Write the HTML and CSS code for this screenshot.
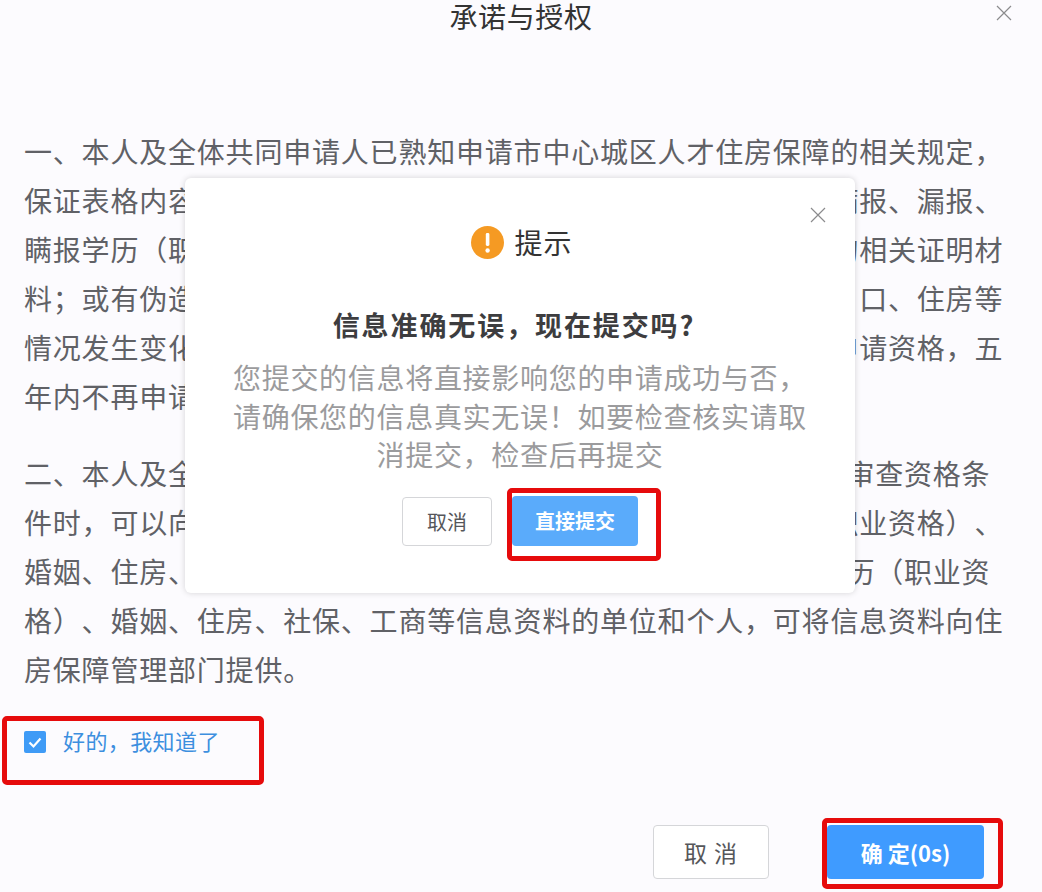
FILE: index.html
```html
<!DOCTYPE html>
<html lang="zh-CN">
<head>
<meta charset="utf-8">
<title>承诺与授权</title>
<link rel="stylesheet" href="styles.css">
</head>
<body>
<main class="page">
  <header class="head">
    <span></span>
    <h1 class="title">承诺与授权</h1>
    <svg class="close top-close" viewBox="0 0 16 16"><path d="M1 1 15 15M15 1 1 15"/></svg>
  </header>
  <section class="terms">
    <p class="para">
      <span class="ln">一、本人及全体共同申请人已熟知申请市中心城区人才住房保障的相关规定，</span>
      <span class="ln">保证表格内容真实有效，无虚假申报情况。如有虚假申请、谎报瞒报、漏报、</span>
      <span class="ln">瞒报学历（职业资格）、婚姻、住房、社保等情况；或提供虚假的相关证明材</span>
      <span class="ln">料；或有伪造、变造证件及材料等情形；或在申请审核期间本人户口、住房等</span>
      <span class="ln">情况发生变化未及时申报的，一经查实，将取消本人及全体共同申请资格，五</span>
      <span class="ln">年内不再申请市中心城区人才住房保障。</span>
    </p>
    <p class="para">
      <span class="ln">二、本人及全体共同申请人同意，市住房保障管理部门<span class="half"></span>在受理和审查资格条</span>
      <span class="ln">件时，可以向公安、民政、人社、市监等单位查询本人的学历（职业资格）、</span>
      <span class="ln">婚姻、住房、社保、工商等信息资料；凡掌握本人及家庭<span class="half"></span>成员学历（职业资</span>
      <span class="ln">格）、婚姻、住房、社保、工商等信息资料的单位和个人，可将信息资料向住</span>
      <span class="ln">房保障管理部门提供。</span>
    </p>
  </section>
  <div class="agree mark">
    <span class="check"><svg viewBox="0 0 22 22"><path d="M5.5 11.5 9.5 15.5 16.5 7.5"/></svg></span>
    <span class="agree-text">好的，我知道了</span>
  </div>
  <footer class="foot">
    <button class="btn btn-plain foot-cancel">取 消</button>
    <div class="mark foot-mark"><button class="btn btn-blue foot-ok">确 定(0s)</button></div>
  </footer>

  <div class="modal">
    <svg class="close modal-close" viewBox="0 0 16 16"><path d="M1 1 15 15M15 1 1 15"/></svg>
    <div class="modal-head">
      <svg class="warn" viewBox="0 0 33 33"><circle cx="16.5" cy="16.5" r="16.5"/><rect class="warn-bar" x="14.8" y="7" width="3.6" height="13" rx="1.4"/><circle class="warn-dot" cx="16.6" cy="24.5" r="2.2"/></svg>
      <span class="modal-title">提示</span>
    </div>
    <h2 class="modal-q">信息准确无误，现在提交吗?</h2>
    <p class="modal-desc">您提交的信息将直接影响您的申请成功与否，<br>请确保您的信息真实无误！如要检查核实请取<br>消提交，检查后再提交</p>
    <div class="modal-actions">
      <button class="btn btn-plain modal-cancel">取消</button>
      <div class="mark modal-mark"><button class="btn btn-blue modal-ok">直接提交</button></div>
    </div>
  </div>
</main>
</body>
</html>
```

FILE: styles.css
```css
* { box-sizing: border-box; }
html, body { margin: 0; padding: 0; }
body {
  background: #fcfbfe;
  font-family: "Noto Sans CJK SC", "Noto Sans", sans-serif;
  text-spacing-trim: space-all;
  font-feature-settings: "palt" 0;
}
.page {
  position: relative;
  width: 1042px;
  height: 892px;
  overflow: hidden;
  display: flex;
  flex-direction: column;
}
.head {
  display: grid;
  grid-template-columns: 1fr auto 1fr;
  align-items: start;
  height: 127px;
  padding: 0 30px;
}
.title {
  margin: 0;
  font-size: 28px;
  font-weight: 400;
  line-height: 32px;
  color: #333;
  letter-spacing: .6px;
}
.close { fill: none; stroke: #8b8b8d; stroke-width: 1.2; }
.top-close { width: 16px; height: 16px; justify-self: end; margin-top: 5px; }
.terms { padding-left: 24px; }
.para {
  margin: 0 0 28px;
  font-size: 28px;
  line-height: 49px;
  letter-spacing: .8px;
  color: #606166;
  white-space: nowrap;
}
.ln { display: block; }
.half { display: inline-block; width: 16px; }
.mark { border: 5px solid #e60b0c; border-radius: 5px; }
.agree {
  margin: -6px 0 0 2px;
  width: 262px;
  height: 69px;
  padding: 8px 0 0 17px;
  display: flex;
  align-items: flex-start;
  gap: 17px;
}
.check {
  flex: none;
  width: 22px;
  height: 22px;
  background: #3f9bf6;
  border-radius: 2px;
  display: flex;
  margin-top: 2px;
}
.check svg { width: 22px; height: 22px; fill: none; stroke: #fff; stroke-width: 2.2; }
.agree-text {
  font-size: 22px;
  line-height: 22px;
  letter-spacing: .4px;
  color: #3d8fdf;
}
.foot {
  display: flex;
  align-items: flex-start;
  margin-top: 40px;
  padding-left: 653px;
  gap: 55px;
}
.btn {
  display: block;
  font-family: inherit;
  border-radius: 4px;
  cursor: pointer;
  padding: 0;
}
.btn-plain { background: #fff; border: 1px solid #d5d6d9; color: #55565a; }
.btn-blue { background: #3f9bff; border: 0; color: #fff; font-weight: 700; }
.foot-cancel { width: 116px; height: 54px; font-size: 23px; letter-spacing: 1px; }
.foot-mark {
  margin-top: -7px;
  margin-left: -2px;
  width: 181px;
  height: 71px;
  padding: 2px 15px 0 0;
}
.foot-ok { width: 157px; height: 54px; font-size: 22px; font-weight: 700; }
.modal {
  position: absolute;
  left: 185px;
  top: 178px;
  width: 670px;
  height: 415px;
  background: #fff;
  border-radius: 6px;
  box-shadow: 0 0 6px rgba(0, 0, 0, .16);
  display: flex;
  flex-direction: column;
  align-items: center;
  padding-top: 48px;
}
.modal-close { position: absolute; right: 29px; top: 29px; width: 16px; height: 16px; }
.modal-head { display: flex; align-items: center; gap: 10px; height: 33px; margin-left: 4px; }
.warn { width: 33px; height: 33px; fill: #f59a23; }
.warn-bar, .warn-dot { fill: #fff; }
.modal-title { font-size: 28px; line-height: 33px; color: #333; letter-spacing: 1px; }
.modal-q {
  margin: 48px 12px 0 0;
  font-size: 27px;
  line-height: 36px;
  font-weight: 700;
  letter-spacing: 1.9px;
  color: #3d3d3f;
}
.modal-desc {
  margin: 15px 0 0;
  font-size: 28px;
  line-height: 38.5px;
  letter-spacing: .7px;
  color: #9b9b9d;
  text-align: center;
}
.modal-actions { display: flex; align-items: flex-start; margin-top: 14px; gap: 15px; margin-left: 23px; }
.modal-cancel { width: 90px; height: 49px; margin-top: 9px; font-size: 20px; }
.modal-mark { width: 154px; height: 73px; padding: 3px 17px 0 0; }
.modal-ok { width: 126px; height: 50px; font-size: 20px; background: #5aabfb; }
```
